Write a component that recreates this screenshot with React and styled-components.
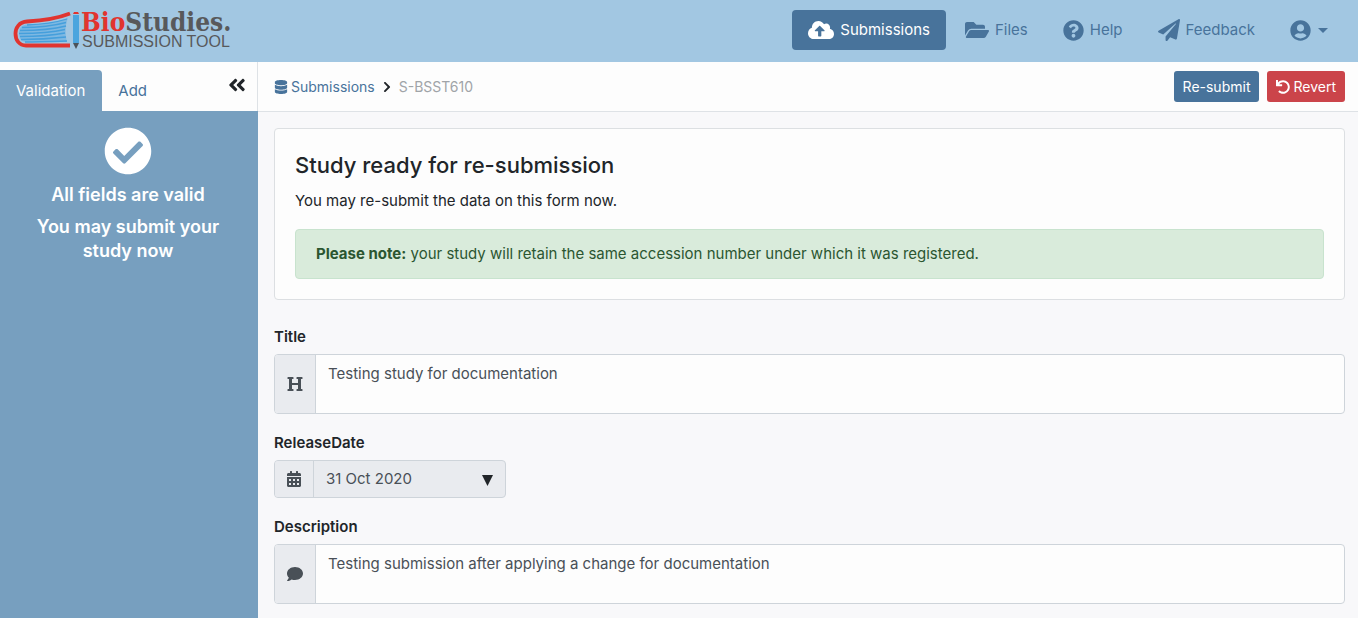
import React from 'react';
import styled, { createGlobalStyle } from 'styled-components';
import {
  FaCloudUploadAlt, FaFolderOpen, FaQuestionCircle, FaPaperPlane, FaUserCircle,
  FaDatabase, FaChevronRight, FaAngleDoubleLeft, FaCheckCircle, FaUndo,
  FaHeading, FaCalendarAlt, FaComment,
} from 'react-icons/fa';

const Global = createGlobalStyle`
  *, *::before, *::after { box-sizing: border-box; }
  body {
    margin: 0;
    background: #f8f8fa;
    color: #212529;
    font-family: Inter, "Liberation Sans", sans-serif;
    font-size: 15px;
    line-height: 24px;
  }
  button, input, textarea { font: inherit; margin: 0; }
  a { color: #48739b; text-decoration: none; }
  svg { display: block; flex: none; }
`;

const Page = styled.div`
  display: flex;
  flex-direction: column;
  min-height: 100vh;
`;

const Header = styled.header`
  display: flex;
  align-items: center;
  justify-content: space-between;
  height: 62px;
  padding: 0 20px 2px 13px;
  background: #a2c7e2;
`;

const Brand = styled.a`
  display: flex;
  align-items: center;
  gap: 1px;
`;

const BrandText = styled.span`
  display: flex;
  flex-direction: column;
  color: #58595b;
`;

const BrandName = styled.span`
  font: bold 26px/24px "DejaVu Serif Condensed", "DejaVu Serif", serif;
  b { color: #e1342f; }
`;

const BrandTagline = styled.span`
  padding-left: 1px;
  font: 16px/16px "Liberation Sans", sans-serif;
`;

const Nav = styled.nav`
  display: flex;
  align-items: center;
  gap: 3px;
`;

const NavLink = styled.a`
  display: flex;
  align-items: center;
  gap: 6px;
  height: 40px;
  padding: 0 16px;
  border-radius: 4px;
  color: ${(p) => (p.$active ? '#fff' : '#48739b')};
  background: ${(p) => (p.$active ? '#48739b' : 'transparent')};
`;

const UserButton = styled.button`
  display: flex;
  align-items: center;
  gap: 7px;
  height: 40px;
  padding: 0 10px 0 16px;
  border: 0;
  background: none;
  color: #48739b;
`;

const Body = styled.div`
  display: flex;
  flex: 1;
`;

const Sidebar = styled.aside`
  display: flex;
  flex-direction: column;
  width: 258px;
  flex: none;
  background: #779fbf;
`;

const Tabs = styled.div`
  display: flex;
  align-items: flex-end;
  height: 49px;
  background: #fdfdfd;
  border-right: 1px solid #dee2e6;
`;

const Tab = styled.button`
  height: 41px;
  padding: 0 17px 0 16px;
  border: 0;
  border-radius: 0 4px 0 0;
  color: ${(p) => (p.$active ? '#fff' : '#48739b')};
  background: ${(p) => (p.$active ? '#779fbf' : 'transparent')};
`;

const CollapseButton = styled.button`
  align-self: center;
  margin-left: auto;
  padding: 0 10px 4px;
  border: 0;
  background: none;
  color: #212529;
`;

const Status = styled.div`
  display: flex;
  flex-direction: column;
  align-items: center;
  gap: 8px;
  padding: 16px 26px 16px 24px;
  color: #fff;
  text-align: center;
`;

const StatusText = styled.p`
  margin: 0;
  font-size: 18px;
  font-weight: 600;
  line-height: 24px;
`;

const Main = styled.main`
  flex: 1;
  min-width: 0;
`;

const Toolbar = styled.div`
  display: flex;
  align-items: center;
  justify-content: space-between;
  height: 50px;
  padding: 0 13px 0 16px;
  background: #fdfdfd;
  border-bottom: 1px solid #dee2e6;
`;

const Crumbs = styled.nav`
  display: flex;
  align-items: center;
  gap: 6px;
  font-size: 14px;
`;

const CrumbLink = styled.a`
  display: flex;
  align-items: center;
  gap: 3px;
`;

const CurrentCrumb = styled.span`
  color: #a0a4a8;
`;

const Actions = styled.div`
  display: flex;
  gap: 8px;
`;

const ActionButton = styled.button`
  display: flex;
  align-items: center;
  gap: 3px;
  height: 31px;
  padding: 0 9px;
  border: 0;
  border-radius: 3px;
  font-size: 14px;
  color: #fff;
  background: ${(p) => (p.$danger ? '#cb444a' : '#48739b')};
`;

const Content = styled.div`
  padding: 16px 13px 14px 16px;
`;

const Card = styled.section`
  padding: 20px;
  border: 1px solid #dcdfe2;
  border-radius: 4px;
  background: #fdfdfd;
`;

const CardTitle = styled.h1`
  margin: 0 0 8px;
  font-size: 22px;
  font-weight: 500;
  line-height: 32px;
`;

const CardText = styled.p`
  margin: 0 0 16px;
`;

const Alert = styled.div`
  padding: 12px 20px;
  border: 1px solid #c8e3ce;
  border-radius: 4px;
  color: #2b5631;
  background: #d9ebdb;
`;

const Form = styled.form`
  display: flex;
  flex-direction: column;
  gap: 17px;
  padding-top: 25px;
`;

const Field = styled.div`
  display: flex;
  flex-direction: column;
  align-items: flex-start;
  gap: 5px;
`;

const Label = styled.label`
  font-weight: 600;
`;

const InputGroup = styled.div`
  display: flex;
  width: ${(p) => p.$width || '100%'};
  height: ${(p) => p.$height};
  border: 1px solid #ced4da;
  border-radius: 4px;
  overflow: hidden;
  background: ${(p) => (p.$muted ? '#e9ebef' : '#fdfdfd')};
`;

const Addon = styled.span`
  display: flex;
  align-items: center;
  padding: 0 12px;
  border-right: 1px solid #ced4da;
  color: #495057;
  background: #e9ebef;
  svg { width: ${(p) => (p.$narrow ? 14 : 16)}px; }
`;

const TextArea = styled.textarea`
  flex: 1;
  min-width: 0;
  padding: 7px 12px;
  border: 0;
  outline: 0;
  resize: none;
  color: #495057;
  background: transparent;
`;

const DateInput = styled.input`
  flex: 1;
  min-width: 0;
  padding: 0 12px;
  border: 0;
  outline: 0;
  color: #495057;
  background: transparent;
`;

const PickerButton = styled.button`
  padding: 2px 12px 0;
  border: 0;
  background: none;
  color: #212529;
`;

const BookLogo = () => (
  <svg width="67" height="38" viewBox="0 0 67 38" fill="none" aria-hidden="true">
    <path d="M57 2.500C43 8 31 9.500 14 10.500C6 11 2.500 17 2.500 22.500C2.500 29 6 34.500 13 34.500H57" stroke="#e1342f" strokeWidth="3.800" />
    <path d="M55 7C42 12 29 13 14 13.500C8 14 6 18 6 22C6 27 8 31 13 31H54C52 23 52 14 55 7Z" fill="#7db8e2" />
    <g stroke="#459fdc" strokeWidth="1.300">
      <path d="M54 8C41 12 29 13.500 14 14" />
      <path d="M53 11.500C40 15 26 16.500 9 16.500" />
      <path d="M53 15C39 18.500 24 19.500 7 19.500" />
      <path d="M52 18.500C39 21.500 24 22.500 6 22.500" />
      <path d="M52 22C39 24.500 24 25.500 7 25.500" />
      <path d="M53 26C39 27.500 24 28.500 8 28.500" />
      <path d="M54 30C39 30.500 24 31 12 31" />
    </g>
    <path d="M60 4h6v28h-6z" fill="#4ba5de" />
    <path d="M61 1h4l1 2h-6z" fill="#e1342f" />
    <path d="M60 32h6l-3 6z" fill="#4b5259" />
  </svg>
);

export default function App() {
  return (
    <Page>
      <Global />
      <Header>
        <Brand href="#" aria-label="BioStudies Submission Tool">
          <BookLogo />
          <BrandText>
            <BrandName><b>Bio</b>Studies.</BrandName>
            <BrandTagline>SUBMISSION TOOL</BrandTagline>
          </BrandText>
        </Brand>
        <Nav>
          <NavLink href="#" $active><FaCloudUploadAlt size={26} />Submissions</NavLink>
          <NavLink href="#"><FaFolderOpen size={24} />Files</NavLink>
          <NavLink href="#"><FaQuestionCircle size={21} />Help</NavLink>
          <NavLink href="#"><FaPaperPlane size={22} />Feedback</NavLink>
          <UserButton aria-label="Account">
            <FaUserCircle size={21} />
            <svg width="10" height="5" viewBox="0 0 10 5"><path d="M0 0h10L5 5z" fill="currentColor" /></svg>
          </UserButton>
        </Nav>
      </Header>
      <Body>
        <Sidebar>
          <Tabs>
            <Tab $active>Validation</Tab>
            <Tab>Add</Tab>
            <CollapseButton aria-label="Collapse"><FaAngleDoubleLeft size={20} /></CollapseButton>
          </Tabs>
          <Status>
            <FaCheckCircle size={48} />
            <StatusText>All fields are valid</StatusText>
            <StatusText>You may submit your study now</StatusText>
          </Status>
        </Sidebar>
        <Main>
          <Toolbar>
            <Crumbs>
              <CrumbLink href="#"><FaDatabase size={14} />Submissions</CrumbLink>
              <FaChevronRight size={12} />
              <CurrentCrumb>S-BSST610</CurrentCrumb>
            </Crumbs>
            <Actions>
              <ActionButton>Re-submit</ActionButton>
              <ActionButton $danger><FaUndo size={14} />Revert</ActionButton>
            </Actions>
          </Toolbar>
          <Content>
            <Card>
              <CardTitle>Study ready for re-submission</CardTitle>
              <CardText>You may re-submit the data on this form now.</CardText>
              <Alert><b>Please note:</b> your study will retain the same accession number under which it was registered.</Alert>
            </Card>
            <Form>
              <Field>
                <Label htmlFor="title">Title</Label>
                <InputGroup $height="60px">
                  <Addon><FaHeading size={16} /></Addon>
                  <TextArea id="title" defaultValue="Testing study for documentation" />
                </InputGroup>
              </Field>
              <Field>
                <Label htmlFor="date">ReleaseDate</Label>
                <InputGroup $height="38px" $width="232px" $muted>
                  <Addon $narrow><FaCalendarAlt size={16} /></Addon>
                  <DateInput id="date" defaultValue="31 Oct 2020" />
                  <PickerButton type="button" aria-label="Open calendar">
                    <svg width="11" height="11" viewBox="0 0 11 11"><path d="M0 0h11L5.500 11z" fill="currentColor" /></svg>
                  </PickerButton>
                </InputGroup>
              </Field>
              <Field>
                <Label htmlFor="description">Description</Label>
                <InputGroup $height="60px">
                  <Addon><FaComment size={16} /></Addon>
                  <TextArea id="description" defaultValue="Testing submission after applying a change for documentation" />
                </InputGroup>
              </Field>
            </Form>
          </Content>
        </Main>
      </Body>
    </Page>
  );
}
